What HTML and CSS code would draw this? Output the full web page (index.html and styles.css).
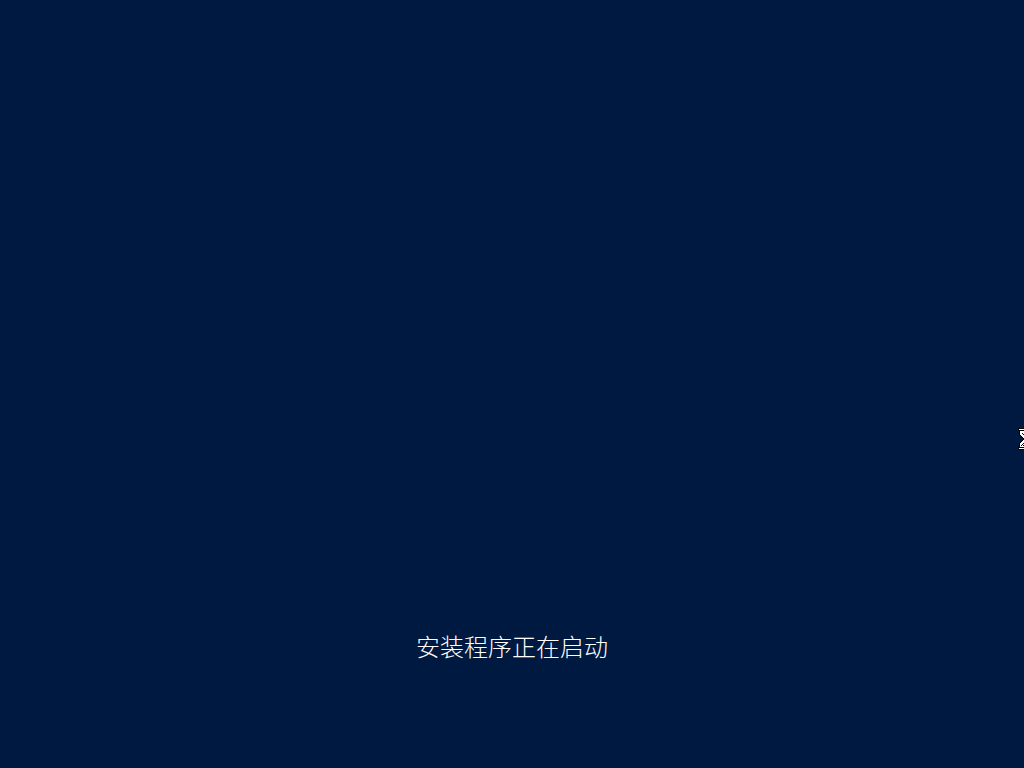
FILE: index.html
```html
<!DOCTYPE html>
<html lang="zh-CN">
<head>
  <meta charset="UTF-8" />
  <meta name="viewport" content="width=device-width, initial-scale=1" />
  <title>安装程序正在启动</title>
  <link rel="stylesheet" href="styles.css">
</head>
<body>
  <main class="setup">
    <p class="status" role="status">安装程序正在启动</p>
  </main>

  <!-- Busy cursor -->
  <svg class="cursor" width="13" height="22" viewBox="0 0 13 22" shape-rendering="crispEdges" aria-hidden="true">
    <path fill="#000" d="M0 0h13v3h-1v4h-1v1h-1v1h-1v1h-1v2h1v1h1v1h1v1h1v4h1v3H0v-3h1v-4h1v-1h1v-1h1v-1h1v-2H4V9H3V8H2V7H1V3H0z" />
    <path fill="#fff" d="M1 1h11v1H1zM2 3h9v4h-1v1H9v1H8v1H7v2h1v1h1v1h1v1h1v4H2v-4h1v-1h1v-1h1v-1h1v-2H5V9H4V8H3V7H2zM1 20h11v1H1z" />
    <path fill="#000" d="M4 5h1v1H4zM6 5h1v1H6zM8 5h1v1H8zM5 6h1v1H5zM7 6h1v1H7zM6 7h1v1H6zM6 13h1v1H6zM5 15h1v1H5zM7 15h1v1H7zM4 16h1v1H4zM6 16h1v1H6zM8 16h1v1H8zM3 17h1v1H3zM5 17h1v1H5zM7 17h1v1H7zM9 17h1v1H9z" />
  </svg>
</body>
</html>
```

FILE: styles.css
```css
* {
  margin: 0;
  padding: 0;
  box-sizing: border-box;
}
body {
  font-family: 'Noto Sans CJK SC', sans-serif;
  background: #001940;
  color: #fff;
  min-height: 100vh;
  overflow: hidden;
}
.setup {
  display: flex;
  flex-direction: column;
  justify-content: flex-end;
  align-items: center;
  min-height: 100vh;
  padding: 0 16px 104px;
}
.status {
  font-size: 24px;
  font-weight: 300;
  line-height: 36px;
  text-align: center;
}
/* Pointer parked on the right edge of the screen */
.cursor {
  position: fixed;
  top: 428px;
  right: -7px;
}
```
